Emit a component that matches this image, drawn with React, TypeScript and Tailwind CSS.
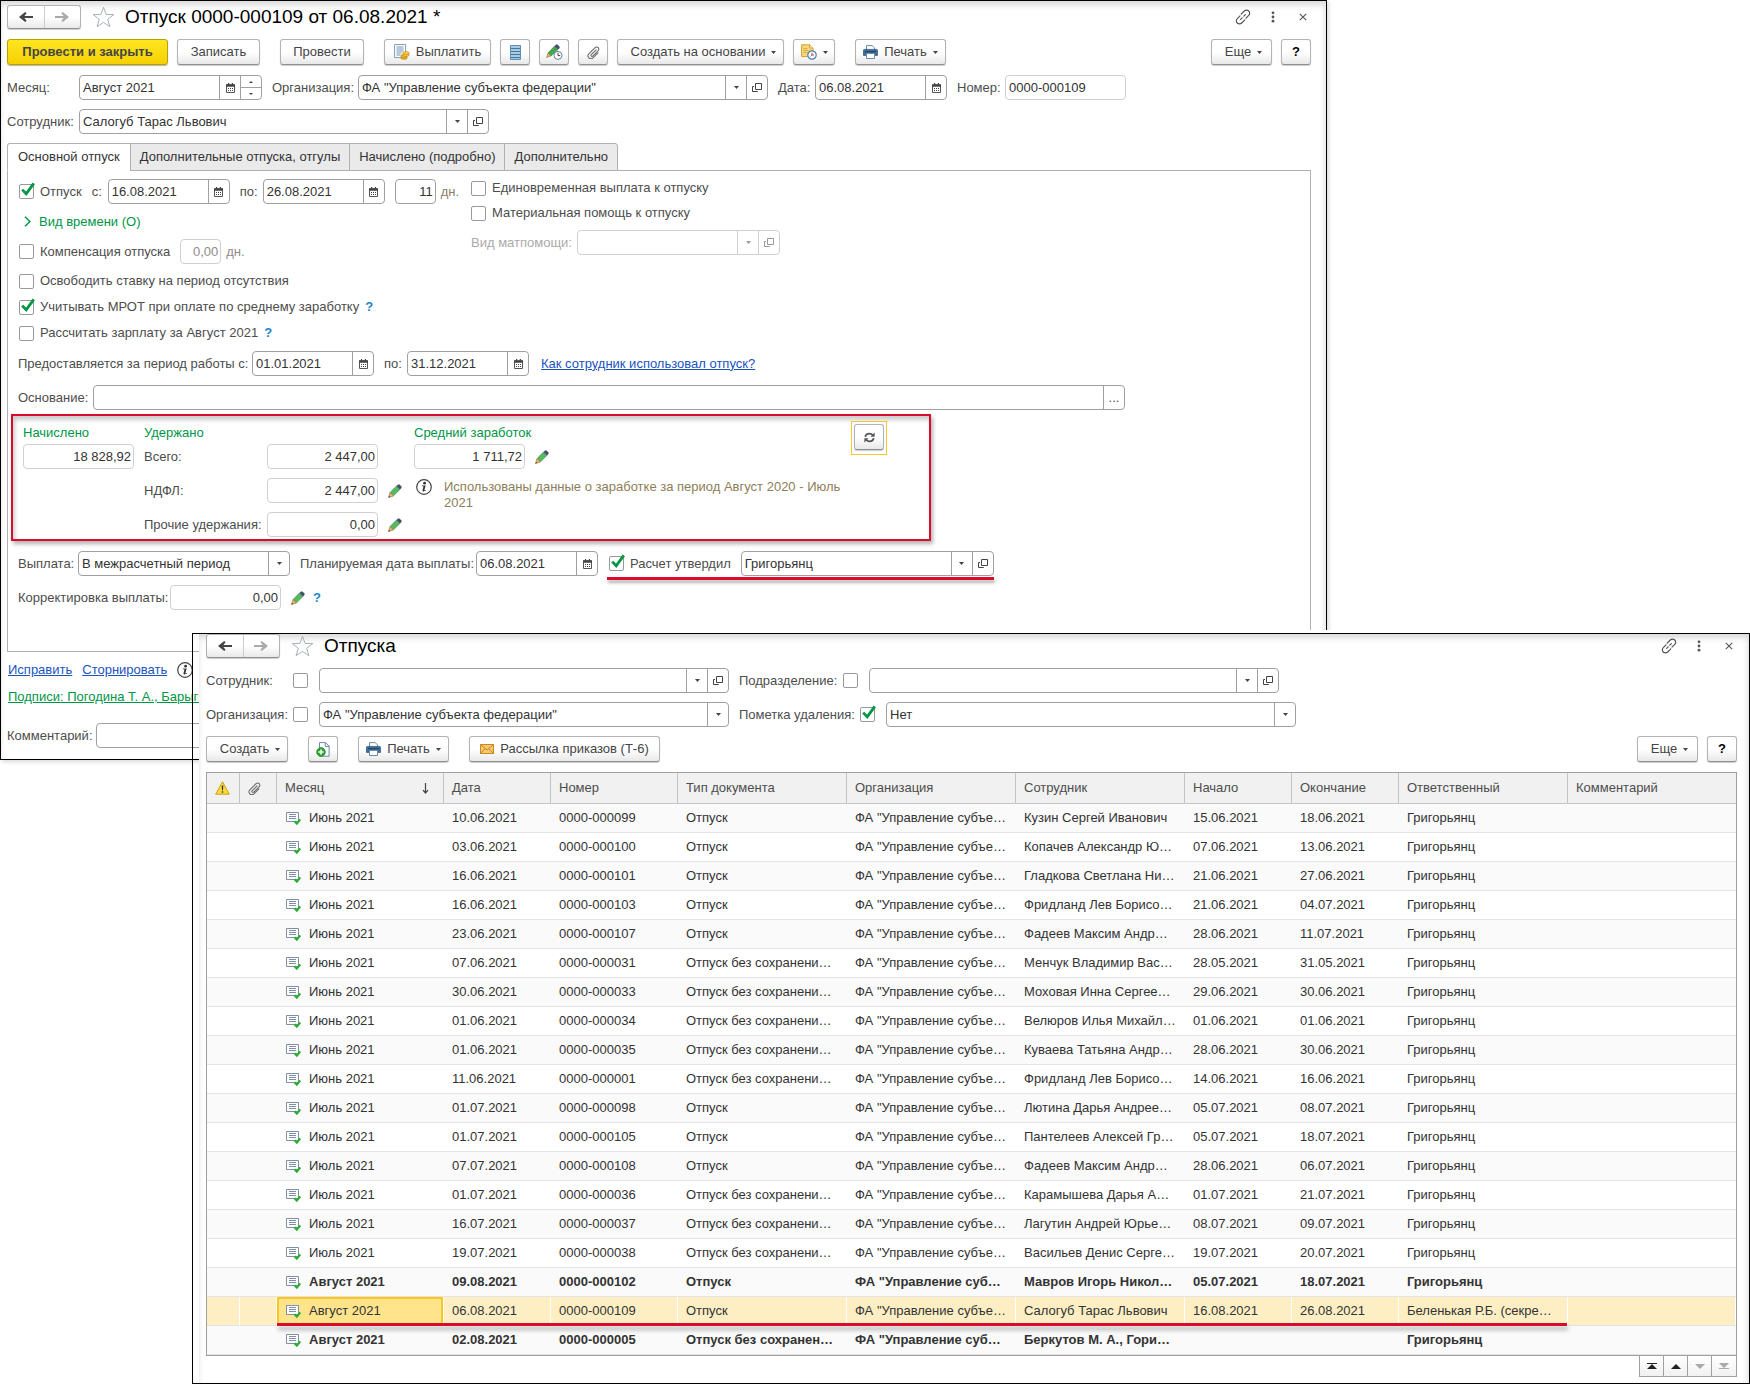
import { useState } from "react";
import type { ReactNode } from "react";

interface Leave {
  month: string;
  date: string;
  num: string;
  type: string;
  org: string;
  person: string;
  from: string;
  to: string;
  owner: string;
  bold?: boolean;
}

const ORG = 'ФА "Управление субъе…';
const UNPAID = "Отпуск без сохранени…";
const OWNER = "Григорьянц";

const LEAVES: Leave[] = [
  { month: "Июнь 2021", date: "10.06.2021", num: "0000-000099", type: "Отпуск", org: ORG, person: "Кузин Сергей Иванович", from: "15.06.2021", to: "18.06.2021", owner: OWNER },
  { month: "Июнь 2021", date: "03.06.2021", num: "0000-000100", type: "Отпуск", org: ORG, person: "Копачев Александр Ю…", from: "07.06.2021", to: "13.06.2021", owner: OWNER },
  { month: "Июнь 2021", date: "16.06.2021", num: "0000-000101", type: "Отпуск", org: ORG, person: "Гладкова Светлана Ни…", from: "21.06.2021", to: "27.06.2021", owner: OWNER },
  { month: "Июнь 2021", date: "16.06.2021", num: "0000-000103", type: "Отпуск", org: ORG, person: "Фридланд Лев Борисо…", from: "21.06.2021", to: "04.07.2021", owner: OWNER },
  { month: "Июнь 2021", date: "23.06.2021", num: "0000-000107", type: "Отпуск", org: ORG, person: "Фадеев Максим Андр…", from: "28.06.2021", to: "11.07.2021", owner: OWNER },
  { month: "Июнь 2021", date: "07.06.2021", num: "0000-000031", type: UNPAID, org: ORG, person: "Менчук Владимир Вас…", from: "28.05.2021", to: "31.05.2021", owner: OWNER },
  { month: "Июнь 2021", date: "30.06.2021", num: "0000-000033", type: UNPAID, org: ORG, person: "Моховая Инна Сергее…", from: "29.06.2021", to: "30.06.2021", owner: OWNER },
  { month: "Июнь 2021", date: "01.06.2021", num: "0000-000034", type: UNPAID, org: ORG, person: "Велюров Илья Михайл…", from: "01.06.2021", to: "01.06.2021", owner: OWNER },
  { month: "Июнь 2021", date: "01.06.2021", num: "0000-000035", type: UNPAID, org: ORG, person: "Куваева Татьяна Андр…", from: "28.06.2021", to: "30.06.2021", owner: OWNER },
  { month: "Июнь 2021", date: "11.06.2021", num: "0000-000001", type: UNPAID, org: ORG, person: "Фридланд Лев Борисо…", from: "14.06.2021", to: "16.06.2021", owner: OWNER },
  { month: "Июль 2021", date: "01.07.2021", num: "0000-000098", type: "Отпуск", org: ORG, person: "Лютина Дарья Андрее…", from: "05.07.2021", to: "08.07.2021", owner: OWNER },
  { month: "Июль 2021", date: "01.07.2021", num: "0000-000105", type: "Отпуск", org: ORG, person: "Пантелеев Алексей Гр…", from: "05.07.2021", to: "18.07.2021", owner: OWNER },
  { month: "Июль 2021", date: "07.07.2021", num: "0000-000108", type: "Отпуск", org: ORG, person: "Фадеев Максим Андр…", from: "28.06.2021", to: "06.07.2021", owner: OWNER },
  { month: "Июль 2021", date: "01.07.2021", num: "0000-000036", type: UNPAID, org: ORG, person: "Карамышева Дарья А…", from: "01.07.2021", to: "21.07.2021", owner: OWNER },
  { month: "Июль 2021", date: "16.07.2021", num: "0000-000037", type: UNPAID, org: ORG, person: "Лагутин Андрей Юрье…", from: "08.07.2021", to: "09.07.2021", owner: OWNER },
  { month: "Июль 2021", date: "19.07.2021", num: "0000-000038", type: UNPAID, org: ORG, person: "Васильев Денис Серге…", from: "19.07.2021", to: "20.07.2021", owner: OWNER },
  { month: "Август 2021", date: "09.08.2021", num: "0000-000102", type: "Отпуск", org: 'ФА "Управление суб…', person: "Мавров Игорь Никол…", from: "05.07.2021", to: "18.07.2021", owner: OWNER, bold: true },
  { month: "Август 2021", date: "06.08.2021", num: "0000-000109", type: "Отпуск", org: ORG, person: "Салогуб Тарас Львович", from: "16.08.2021", to: "26.08.2021", owner: "Беленькая Р.Б. (секре…" },
  { month: "Август 2021", date: "02.08.2021", num: "0000-000005", type: "Отпуск без сохранен…", org: 'ФА "Управление суб…', person: "Беркутов М. А., Гори…", from: "", to: "", owner: OWNER, bold: true },
];

/* ---------- icons ---------- */

function ArrowIcon({ right }: { right?: boolean }) {
  return (
    <svg width="14" height="10" viewBox="0 0 14 10" fill="currentColor" aria-hidden="true">
      {right ? (
        <path d="M0 3.9h8.6L6.4 1.2 7.8 0 14 5l-6.2 5-1.4-1.2 2.2-2.7H0z" />
      ) : (
        <path d="M14 3.9H5.4l2.2-2.7L6.2 0 0 5l6.2 5 1.4-1.2-2.2-2.7H14z" />
      )}
    </svg>
  );
}

function StarIcon() {
  return (
    <svg width="23" height="22" viewBox="0 0 23 22" fill="none" stroke="#a9b0b8" strokeWidth="1" aria-hidden="true">
      <path d="M11.5 1.2l2.6 7.2 7.7.2-6.1 4.7 2.2 7.4-6.4-4.3-6.4 4.3 2.2-7.4L1.2 8.6l7.7-.2z" />
    </svg>
  );
}

function LinkIcon() {
  return (
    <svg width="16" height="16" viewBox="0 0 16 16" fill="none" stroke="#555" strokeWidth="1.2" strokeLinecap="round" aria-hidden="true">
      <path d="M6.2 5.1L9.3 2a3 3 0 0 1 4.4 0 3 3 0 0 1 0 4.4L11 9.1 M9.8 10.9L6.7 14a3 3 0 0 1-4.4 0 3 3 0 0 1 0-4.4L5 6.9 M5.6 10.4l1.6-1.6 M8.8 7.2l1.6-1.6" />
    </svg>
  );
}

function DotsIcon() {
  return (
    <svg width="4" height="12" viewBox="0 0 4 12" fill="#555" aria-hidden="true">
      <circle cx="2" cy="1.8" r="1.4" />
      <circle cx="2" cy="6" r="1.4" />
      <circle cx="2" cy="10.2" r="1.4" />
    </svg>
  );
}

function CloseIcon() {
  return (
    <svg width="8" height="8" viewBox="0 0 8 8" stroke="#555" strokeWidth="1.1" aria-hidden="true">
      <path d="M.8.8l6.4 6.4M7.2.8L.8 7.2" />
    </svg>
  );
}

function Caret() {
  return (
    <svg width="5" height="3" viewBox="0 0 5 3" fill="currentColor" aria-hidden="true">
      <path d="M0 0h5L2.5 3z" />
    </svg>
  );
}

function CalendarIcon() {
  return (
    <svg width="9" height="10" viewBox="0 0 9 10" aria-hidden="true">
      <path d="M.5 2h8v7.5h-8z" fill="#fff" stroke="#555" />
      <path d="M0 1.3h9v2.4H0zM2 0h1.2v2H2zM5.8 0H7v2H5.8z" fill="#444" />
      <path d="M2 5h1v1H2zM4 5h1v1H4zM6 5h1v1H6zM2 7h1v1H2zM4 7h1v1H4zM6 7h1v1H6z" fill="#444" />
    </svg>
  );
}

function OpenIcon() {
  return (
    <svg width="10" height="10" viewBox="0 0 10 10" fill="none" stroke="currentColor" aria-hidden="true">
      <path d="M3.5.5h6v6h-6zM2 3.5H.5v5h5V8" />
    </svg>
  );
}

function PencilIcon() {
  return (
    <svg width="14" height="14" viewBox="0 0 14 14" className="shrink-0" aria-hidden="true">
      <path d="M.5 13.5l1.5-5L5.5 12z" fill="#f2b35c" stroke="#8a6a3a" strokeWidth=".6" />
      <path d="M.5 13.5l.5-1.6L2.1 13z" fill="#333" />
      <path d="M2.3 8.2l6.2-6.1 3.4 3.4-6.2 6.1z" fill="#55bb5e" stroke="#3d7d47" strokeWidth=".6" />
      <path d="M8.5 2.1L10 .6h1.5l2 2v1.3l-1.6 1.6z" fill="#44506a" />
    </svg>
  );
}

function InfoIcon() {
  return (
    <svg width="16" height="16" viewBox="0 0 16 16" className="shrink-0" aria-hidden="true">
      <circle cx="8" cy="8" r="7.3" fill="#fff" stroke="#444" strokeWidth="1.2" />
      <circle cx="8.6" cy="4.2" r="1.4" fill="#333" />
      <path d="M5.8 6.4h3.9l-1.3 4.7c-.1.5.4.4 1.3-.3l.3.5c-1 1.3-3.9 1.8-3.5-.1l1-3.9H5.8z" fill="#333" />
    </svg>
  );
}

function PayIcon() {
  return (
    <svg width="16" height="16" viewBox="0 0 16 16" aria-hidden="true">
      <path d="M.6.6h11v13h-11z" fill="#fff" stroke="#7d9bb3" />
      <path d="M2.5 3h7M2.5 5h7M2.5 7h7M2.5 9h5M2.5 11h4" stroke="#6f93b5" />
      <path d="M7 11.5c0-1 6-1 6 0v3c0 1-6 1-6 0z" fill="#f0b429" stroke="#b77f12" strokeWidth=".6" />
      <path d="M9 8.5c0-1 6-1 6 0v3c0 1-6 1-6 0z" fill="#f9cf4a" stroke="#b77f12" strokeWidth=".6" />
      <path d="M9 9.8c1 .9 5 .9 6 0M7 13c1 .9 5 .9 6 0" fill="none" stroke="#b77f12" strokeWidth=".6" />
    </svg>
  );
}

function ListIcon() {
  return (
    <svg width="11" height="15" viewBox="0 0 11 15" aria-hidden="true">
      <path d="M.5.5h10v14H.5z" fill="#a8cbe4" stroke="#5f8fb3" />
      <path d="M1 3.5h9M1 6.5h9M1 9.5h9M1 12.5h9" stroke="#47799f" />
    </svg>
  );
}

function PencilClockIcon() {
  return (
    <svg width="17" height="16" viewBox="0 0 17 16" aria-hidden="true">
      <path d="M.6 13.4l1.6-4.6 3 3z" fill="#f0b45a" stroke="#8a6a3a" strokeWidth=".6" />
      <path d="M2.2 8.8L8.4 2.2l3.6 3.4-6.8 6.2z" fill="#43a84c" stroke="#2c7d3a" strokeWidth=".6" />
      <path d="M8.4 2.2L10 .6h1.4l2.2 2.2v1.4L12 5.6z" fill="#44506a" />
      <circle cx="12" cy="11.4" r="4" fill="#fff" stroke="#6a8296" />
      <path d="M12 8.8v2.8h2.2" fill="none" stroke="#444" />
    </svg>
  );
}

function ClipIcon() {
  return (
    <svg width="13" height="13" viewBox="0 0 14 14" fill="none" stroke="#666" strokeWidth="1.1" strokeLinecap="round" aria-hidden="true">
      <path d="M9.8 4.2L4.6 9.4a1.1 1.1 0 0 0 1.6 1.6l5.9-5.9a2.4 2.4 0 0 0 0-3.4 2.4 2.4 0 0 0-3.4 0L2 8.4a3.2 3.2 0 0 0 0 4.4 3.2 3.2 0 0 0 4.4 0l5.4-5.4" />
    </svg>
  );
}

function NoteClockIcon() {
  return (
    <svg width="16" height="16" viewBox="0 0 16 16" aria-hidden="true">
      <path d="M.6.8h8.2L12 4v8.6H.6z" fill="#f8d77a" stroke="#cfa136" />
      <path d="M8.6.8V4H12" fill="#fff3c9" stroke="#cfa136" />
      <path d="M2.4 4.5h4M2.4 6.5h5M2.4 8.5h4" stroke="#cfa136" strokeWidth=".8" />
      <circle cx="11" cy="11" r="4.2" fill="#fff" stroke="#4a7fae" strokeWidth="1.2" />
      <path d="M11 8.6V11h2" fill="none" stroke="#d03a2b" />
      <path d="M11 11l-1.6 1.4" stroke="#4a7fae" />
    </svg>
  );
}

function PrinterIcon() {
  return (
    <svg width="15" height="14" viewBox="0 0 15 14" aria-hidden="true">
      <path d="M3.5 5V.6h5.6l2.4 2.2V5" fill="#fff" stroke="#6c8ba6" />
      <path d="M1.4 4.4h12.2c.6 0 1 .4 1 1v5H.4v-5c0-.6.4-1 1-1z" fill="#3d6f9c" stroke="#2b5173" strokeWidth=".7" />
      <path d="M2 6.7h11" stroke="#1d3c58" />
      <path d="M3.5 8.5h8v5h-8z" fill="#fff" stroke="#6c8ba6" />
    </svg>
  );
}

function CopyAddIcon() {
  return (
    <svg width="14" height="15" viewBox="0 0 14 15" aria-hidden="true">
      <path d="M3.5.6h6l3.6 3.6v10H3.5z" fill="#fff" stroke="#6c8ba6" />
      <path d="M9.3.6v3.8h3.8" fill="none" stroke="#6c8ba6" />
      <circle cx="5" cy="10" r="4.4" fill="#2ba52f" stroke="#1b7d22" strokeWidth=".6" />
      <path d="M5 7.4v5.2M2.4 10h5.2" stroke="#fff" strokeWidth="1.6" />
    </svg>
  );
}

function MailIcon() {
  return (
    <svg width="14" height="10" viewBox="0 0 14 10" aria-hidden="true">
      <path d="M.5.5h13v9H.5z" fill="#f7c76c" stroke="#c98a22" />
      <path d="M.5.5L7 6 13.5.5M.5 9.5l4.8-5M13.5 9.5l-4.8-5" fill="none" stroke="#b9791a" strokeWidth=".8" />
    </svg>
  );
}

function WarnIcon() {
  return (
    <svg width="15" height="14" viewBox="0 0 15 14" aria-hidden="true">
      <path d="M7.5.8l6.8 12.4H.7z" fill="#ffd93b" stroke="#c9a414" strokeLinejoin="round" />
      <path d="M6.7 4.6h1.6l-.3 4.6h-1z M6.8 10.2h1.4v1.5H6.8z" fill="#333" />
    </svg>
  );
}

function RefreshIcon() {
  return (
    <svg width="11" height="11" viewBox="0 0 12 11" fill="none" stroke="#555" strokeWidth="2" aria-hidden="true">
      <path d="M1.5 4.8C1.8 2.6 3.7 1.3 6 1.3c1.5 0 2.6.5 3.4 1.5M10.5 6.2c-.3 2.2-2.2 3.5-4.5 3.5-1.5 0-2.6-.5-3.4-1.5" />
      <path d="M11.6 0v4.6H7zM.4 11V6.4H5z" fill="#555" stroke="none" />
    </svg>
  );
}

function PostedIcon() {
  return (
    <svg width="15" height="13" viewBox="0 0 15 13" className="mt-px shrink-0" aria-hidden="true">
      <path d="M.5.5h12v9H.5z" fill="#fff" stroke="#7f8fa6" />
      <path d="M3 2.5h7M3 4.5h7M3 6.5h7" stroke="#7f8fa6" />
      <path d="M8.5 9.3l2.3 2.3 3.5-4.2" fill="none" stroke="#2cae35" strokeWidth="2.2" />
    </svg>
  );
}

/* ---------- controls ---------- */

const BTN =
  "flex h-[26px] items-center justify-center rounded-[3px] border border-[#b3b3b3] border-b-[#8f8f8f] bg-gradient-to-b from-white from-50% to-[#e9e9e9] text-[#444] shadow-[0_1px_1px_rgba(0,0,0,0.2)]";
const CELL = "flex h-full w-[21px] shrink-0 items-center justify-center border-l";

function Btn({ className, label, children }: { className: string; label?: string; children: ReactNode }) {
  return (
    <button type="button" aria-label={label} className={`${BTN} ${className}`}>
      {children}
    </button>
  );
}

function Box({ className, muted, children }: { className: string; muted?: boolean; children: ReactNode }) {
  return (
    <div className={`flex h-[25px] items-center overflow-hidden rounded-[4px] border bg-white ${muted ? "border-[#d0d0d0]" : "border-[#a0a0a0]"} ${className}`}>
      {children}
    </div>
  );
}

interface TextProps {
  id: string;
  value?: string;
  className: string;
  right?: boolean;
  muted?: boolean;
  disabled?: boolean;
}

function TextField({ id, value = "", className, right, muted, disabled }: TextProps) {
  return (
    <Box className={className} muted={muted}>
      <input id={id} type="text" defaultValue={value} disabled={disabled}
        className={`h-full w-full min-w-0 bg-transparent outline-none ${right ? "pr-[2px] text-right" : "pl-[3px]"} ${disabled ? "text-[#8c8c8c]" : "text-[#333]"}`} />
    </Box>
  );
}

function DateField({ id, value, className, spin }: { id: string; value: string; className: string; spin?: boolean }) {
  return (
    <Box className={className}>
      <input id={id} type="text" defaultValue={value} className="h-full w-full min-w-0 pl-[3px] text-[#333] outline-none" />
      <button type="button" aria-label="Выбрать дату" className={`${CELL} border-[#a0a0a0]`}><CalendarIcon /></button>
      {spin && (
        <span className="flex h-full w-[21px] shrink-0 flex-col border-l border-[#a0a0a0]">
          <button type="button" aria-label="Больше" className="flex flex-1 items-center justify-center border-b border-[#a0a0a0]">
            <svg width="4" height="2" viewBox="0 0 4 2" fill="#444"><path d="M0 2h4L2 0z" /></svg>
          </button>
          <button type="button" aria-label="Меньше" className="flex flex-1 items-center justify-center">
            <svg width="4" height="2" viewBox="0 0 4 2" fill="#444"><path d="M0 0h4L2 2z" /></svg>
          </button>
        </span>
      )}
    </Box>
  );
}

function SelectField({ id, value = "", className, open, disabled }: { id: string; value?: string; className: string; open?: boolean; disabled?: boolean }) {
  const cell = disabled ? "border-[#d0d0d0] text-[#999]" : "border-[#a0a0a0] text-[#444]";
  return (
    <Box className={className} muted={disabled}>
      <select id={id} defaultValue={value} disabled={disabled} className="h-full w-full min-w-0 appearance-none bg-transparent pl-[3px] text-[#333] outline-none">
        <option value={value}>{value}</option>
      </select>
      <span className={`${CELL} ${cell}`}><Caret /></span>
      {open && (
        <button type="button" aria-label="Открыть" disabled={disabled} className={`${CELL} ${cell}`}><OpenIcon /></button>
      )}
    </Box>
  );
}

function Check({ id, label, checked = false }: { id: string; label?: string; checked?: boolean }) {
  const [on, setOn] = useState(checked);
  return (
    <span className="flex h-4 items-center gap-[6px] whitespace-nowrap">
      <span className="relative size-[15px] shrink-0">
        <input id={id} type="checkbox" checked={on} onChange={(e) => setOn(e.target.checked)}
          className="block size-[15px] appearance-none rounded-[2px] border border-[#999] bg-white" />
        {on && (
          <svg width="15" height="15" viewBox="0 0 15 15" className="pointer-events-none absolute -top-[2px] left-[2px]" fill="none" stroke="#009646" strokeWidth="2.8" aria-hidden="true">
            <path d="M1.2 7.6l4 4.2L12.8 1.4" />
          </svg>
        )}
      </span>
      {label && <label htmlFor={id}>{label}</label>}
    </span>
  );
}

function Help() {
  return <button type="button" aria-label="Подсказка" className="font-bold text-[#1c86c7]">?</button>;
}

function Edit() {
  return <button type="button" aria-label="Изменить"><PencilIcon /></button>;
}

function TitleBar({ title }: { title: string }) {
  return (
    <header className="flex h-6 items-center">
      <div className="flex h-6 w-[74px] shrink-0 overflow-hidden rounded-[3px] border border-[#b3b3b3] border-b-[#8f8f8f] bg-gradient-to-b from-white from-50% to-[#e9e9e9] shadow-[0_1px_1px_rgba(0,0,0,0.2)]">
        <button type="button" aria-label="Назад" className="flex flex-1 items-center justify-center border-r border-[#ccc] text-[#444]"><ArrowIcon /></button>
        <button type="button" aria-label="Вперед" className="flex flex-1 items-center justify-center text-[#aaa]"><ArrowIcon right /></button>
      </div>
      <button type="button" aria-label="В избранное" className="ml-[11px]"><StarIcon /></button>
      <h1 className="ml-[10px] flex-1 truncate text-[19px] leading-6 text-black">{title}</h1>
      <button type="button" aria-label="Ссылка"><LinkIcon /></button>
      <button type="button" aria-label="Меню" className="ml-5"><DotsIcon /></button>
      <button type="button" aria-label="Закрыть" className="mr-1 ml-6"><CloseIcon /></button>
    </header>
  );
}

/* ---------- windows ---------- */

const TABS = ["Основной отпуск", "Дополнительные отпуска, отгулы", "Начислено (подробно)", "Дополнительно"];

function LeaveForm() {
  const [tab, setTab] = useState(0);

  return (
    <section className="mr-[423px] border border-black bg-white pt-1 pr-[15px] pb-[11px] pl-[6px] shadow-[inset_-1px_4px_6px_rgba(0,0,0,0.15),2px_2px_4px_rgba(0,0,0,0.15)]">
      <TitleBar title="Отпуск 0000-000109 от 06.08.2021 *" />

      <div className="mt-[10px] flex">
        <button type="button" className="h-[26px] w-[161px] rounded-[3px] border border-[#b8a000] bg-gradient-to-b from-[#ffe61f] to-[#f5d000] font-bold text-[#444] shadow-[0_1px_1px_rgba(0,0,0,0.3)]">
          Провести и закрыть
        </button>
        <Btn className="ml-[9px] w-[83px]">Записать</Btn>
        <Btn className="ml-5 w-[84px]">Провести</Btn>
        <Btn className="ml-5 w-[107px] gap-[6px]"><PayIcon />Выплатить</Btn>
        <Btn className="ml-[9px] w-[30px]" label="Список"><ListIcon /></Btn>
        <Btn className="ml-[9px] w-[30px]" label="Исправления"><PencilClockIcon /></Btn>
        <Btn className="ml-[9px] w-[30px]" label="Файлы"><ClipIcon /></Btn>
        <Btn className="ml-[9px] w-[167px] gap-[6px] pl-[6px]">Создать на основании<Caret /></Btn>
        <Btn className="ml-[9px] w-[42px] gap-[6px]" label="Напоминания"><NoteClockIcon /><Caret /></Btn>
        <Btn className="ml-5 w-[91px] gap-[6px]"><PrinterIcon />Печать<Caret /></Btn>
        <Btn className="ml-auto w-[61px] gap-[6px] pl-1">Еще<Caret /></Btn>
        <Btn className="ml-[9px] w-[30px] font-bold text-black">?</Btn>
      </div>

      <div className="mt-[10px] flex items-center whitespace-nowrap">
        <label htmlFor="month" className="w-[72px]">Месяц:</label>
        <DateField id="month" value="Август 2021" className="w-[183px]" spin />
        <label htmlFor="org" className="ml-[10px] w-[86px]">Организация:</label>
        <SelectField id="org" value={'ФА "Управление субъекта федерации"'} className="w-[410px]" open />
        <label htmlFor="date" className="ml-[10px] w-[37px]">Дата:</label>
        <DateField id="date" value="06.08.2021" className="w-[132px]" />
        <label htmlFor="number" className="ml-[10px] w-12">Номер:</label>
        <TextField id="number" value="0000-000109" className="w-[121px]" muted />
      </div>

      <div className="mt-[9px] flex items-center">
        <label htmlFor="employee" className="w-[72px]">Сотрудник:</label>
        <SelectField id="employee" value="Салогуб Тарас Львович" className="w-[410px]" open />
      </div>

      <div role="tablist" className="relative mt-[9px] -mb-px flex">
        {TABS.map((t, i) => (
          <button key={t} type="button" role="tab" aria-selected={tab === i} onClick={() => setTab(i)}
            className={`-mr-px h-7 border border-[#b0b0b0] px-[9px] text-[#333] first:rounded-tl-[3px] first:px-[10px] last:rounded-tr-[3px] ${tab === i ? "border-b-white bg-white" : "bg-[#eaeaea]"}`}>
            {t}
          </button>
        ))}
      </div>

      <div className="border border-[#b0b0b0] pt-2 pb-[41px] pl-[10px]">
        <div className="flex pl-px">
          <div className="flex w-[452px] shrink-0 flex-col gap-[9px] whitespace-nowrap">
            <div className="flex items-center">
              <Check id="leave" label="Отпуск" checked />
              <label htmlFor="from" className="ml-[10px] w-[16px]">с:</label>
              <DateField id="from" value="16.08.2021" className="w-[122px]" />
              <label htmlFor="to" className="ml-[10px] w-[23px]">по:</label>
              <DateField id="to" value="26.08.2021" className="w-[122px]" />
              <TextField id="days" value="11" className="ml-[10px] w-[41px]" right />
              <label htmlFor="days" className="ml-[5px] text-[#8c7e68]">дн.</label>
            </div>
            <button type="button" className="flex h-[17px] items-center gap-2 pl-[5px] text-[#009646]">
              <svg width="7" height="11" viewBox="0 0 7 11" fill="none" stroke="currentColor" strokeWidth="1.5" aria-hidden="true"><path d="M1 .8l5 4.7-5 4.7" /></svg>
              Вид времени (О)
            </button>
            <div className="flex items-center">
              <Check id="comp" label="Компенсация отпуска" />
              <TextField id="compDays" value="0,00" className="ml-[10px] w-[41px]" right muted disabled />
              <label htmlFor="compDays" className="ml-[5px] text-[#8c8c8c]">дн.</label>
            </div>
          </div>
          <div className="flex flex-col gap-[9px] pt-px">
            <Check id="once" label="Единовременная выплата к отпуску" />
            <Check id="aid" label="Материальная помощь к отпуску" />
            <div className="flex items-center">
              <label htmlFor="aidKind" className="w-[106px] text-[#aaa]">Вид матпомощи:</label>
              <SelectField id="aidKind" className="w-[203px]" open disabled />
            </div>
          </div>
        </div>

        <div className="mt-[9px] flex flex-col gap-[10px] pl-px">
          <Check id="release" label="Освободить ставку на период отсутствия" />
          <div className="flex gap-[6px]"><Check id="mrot" label="Учитывать МРОТ при оплате по среднему заработку" checked /><Help /></div>
          <div className="flex gap-[6px]"><Check id="calc" label="Рассчитать зарплату за Август 2021" /><Help /></div>
        </div>
        <div className="mt-[10px] flex items-center">
          <label htmlFor="pFrom" className="w-[234px]">Предоставляется за период работы с:</label>
          <DateField id="pFrom" value="01.01.2021" className="w-[122px]" />
          <label htmlFor="pTo" className="ml-[10px] w-[23px]">по:</label>
          <DateField id="pTo" value="31.12.2021" className="w-[122px]" />
          <a href="#usage" className="ml-3 text-[#1a54c0] underline">Как сотрудник использовал отпуск?</a>
        </div>
        <div className="mt-[9px] mr-[185px] flex items-center">
          <label htmlFor="basis" className="w-[75px] shrink-0">Основание:</label>
          <Box className="flex-1">
            <input id="basis" type="text" className="h-full w-full min-w-0 pl-[3px] text-[#333] outline-none" />
            <button type="button" aria-label="Выбрать основание" className={`${CELL} border-[#a0a0a0]`}>...</button>
          </Box>
        </div>

        <div className="mt-1 mr-[379px] -ml-[7px] flex border-2 border-[#d90d2b] pt-[9px] pb-[2px] pl-[10px] shadow-[2px_3px_4px_rgba(0,0,0,0.3),inset_2px_4px_4px_rgba(0,0,0,0.2)]">
          <div className="flex w-[121px] shrink-0 flex-col gap-[3px]">
            <label htmlFor="accrued" className="text-[#009646]">Начислено</label>
            <TextField id="accrued" value="18 828,92" className="w-[111px]" right muted />
          </div>
          <div className="w-[270px] shrink-0">
            <div className="text-[#009646]">Удержано</div>
            <div className="mt-[3px] flex flex-col gap-[9px]">
              <div className="flex items-center">
                <label htmlFor="held" className="w-[123px]">Всего:</label>
                <TextField id="held" value="2 447,00" className="w-[111px]" right muted />
              </div>
              <div className="flex items-center">
                <label htmlFor="ndfl" className="w-[123px]">НДФЛ:</label>
                <TextField id="ndfl" value="2 447,00" className="mr-[10px] w-[111px]" right muted />
                <Edit />
              </div>
              <div className="flex items-center">
                <label htmlFor="other" className="w-[123px]">Прочие удержания:</label>
                <TextField id="other" value="0,00" className="mr-[10px] w-[111px]" right muted />
                <Edit />
              </div>
            </div>
          </div>
          <div className="flex-1">
            <label htmlFor="average" className="block text-[#009646]">Средний заработок</label>
            <div className="mt-[3px] flex items-center gap-[10px]">
              <TextField id="average" value="1 711,72" className="w-[111px]" right muted />
              <Edit />
            </div>
            <div className="mt-[10px] flex gap-3 pl-[2px] text-[#8c7e58]">
              <InfoIcon />
              <p className="max-w-[400px]">Использованы данные о заработке за период Август 2020 - Июль 2021</p>
            </div>
          </div>
          <div className="mr-[42px] -mt-1 h-[34px] border border-[#f5c731] p-[2px]">
            <Btn className="w-[30px]" label="Пересчитать"><RefreshIcon /></Btn>
          </div>
        </div>

        <div className="mt-[10px] flex items-center whitespace-nowrap">
          <label htmlFor="payout" className="w-[60px]">Выплата:</label>
          <SelectField id="payout" value="В межрасчетный период" className="w-[212px]" />
          <label htmlFor="payDate" className="ml-[10px] w-[176px]">Планируемая дата выплаты:</label>
          <DateField id="payDate" value="06.08.2021" className="w-[122px]" />
          <div className="relative ml-[9px] flex items-center pl-[2px]">
            <Check id="approved" label="Расчет утвердил" checked />
            <SelectField id="approver" value="Григорьянц" className="ml-[10px] w-[253px]" open />
            <div className="absolute inset-x-0 -bottom-1 h-[3px] bg-[#d90d2b] shadow-[1px_3px_3px_rgba(0,0,0,0.3)]" />
          </div>
        </div>
        <div className="mt-[9px] flex items-center">
          <label htmlFor="adjust" className="w-[152px]">Корректировка выплаты:</label>
          <TextField id="adjust" value="0,00" className="mr-[10px] w-[111px]" right muted />
          <Edit />
          <span className="ml-2"><Help /></span>
        </div>
      </div>

      <div className="mt-[10px] flex items-center pl-px text-[#1a54c0]">
        <a href="#fix" className="underline">Исправить</a>
        <a href="#reverse" className="ml-[10px] underline">Сторнировать</a>
        <span className="ml-[10px]"><InfoIcon /></span>
      </div>
      <a href="#signs" className="mt-[11px] block w-[300px] pl-px text-[#009646] underline">Подписи: Погодина Т. А., Барыгин</a>
      <div className="mt-[18px] flex items-center">
        <label htmlFor="comment" className="w-[89px]">Комментарий:</label>
        <TextField id="comment" className="w-[410px]" />
      </div>
    </section>
  );
}

const TH = "h-[31px] border-r border-b border-[#c4c4c4] bg-[#f1f1f1] px-2 text-left font-normal";

function LeaveList() {
  const [selected, setSelected] = useState(17);

  return (
    <section className="relative -mt-[127px] ml-[192px] border border-black pl-[6px] shadow-[0_-3px_0_white]">
      <div className="bg-white pr-3 pb-[6px] pl-[7px] shadow-[inset_-1px_4px_6px_rgba(0,0,0,0.15)]">
        <TitleBar title="Отпуска" />

        <div className="mt-[10px] flex items-center whitespace-nowrap">
          <label htmlFor="fEmployee" className="w-[87px]">Сотрудник:</label>
          <Check id="fEmployeeOn" />
          <SelectField id="fEmployee" className="ml-[11px] w-[410px]" open />
          <label htmlFor="fDept" className="ml-[10px] w-[104px]">Подразделение:</label>
          <Check id="fDeptOn" />
          <SelectField id="fDept" className="ml-[11px] w-[410px]" open />
        </div>
        <div className="mt-[9px] flex items-center whitespace-nowrap">
          <label htmlFor="fOrg" className="w-[87px]">Организация:</label>
          <Check id="fOrgOn" />
          <SelectField id="fOrg" value={'ФА "Управление субъекта федерации"'} className="ml-[11px] w-[410px]" />
          <label htmlFor="fDeleted" className="ml-[10px] w-[121px]">Пометка удаления:</label>
          <Check id="fDeletedOn" checked />
          <SelectField id="fDeleted" value="Нет" className="ml-[11px] w-[410px]" />
        </div>

        <div className="mt-[9px] flex">
          <Btn className="w-[82px] gap-[6px] pl-[6px]">Создать<Caret /></Btn>
          <Btn className="ml-5 w-[30px]" label="Скопировать"><CopyAddIcon /></Btn>
          <Btn className="ml-5 w-[91px] gap-[6px]"><PrinterIcon />Печать<Caret /></Btn>
          <Btn className="ml-5 w-[191px] gap-[6px]"><MailIcon />Рассылка приказов (Т-6)</Btn>
          <Btn className="ml-auto w-[61px] gap-[6px] pl-1">Еще<Caret /></Btn>
          <Btn className="ml-[9px] w-[30px] font-bold text-black">?</Btn>
        </div>

        <div className="relative mt-[10px] border border-[#a0a0a0]">
          <table className="w-full table-fixed border-separate border-spacing-0 whitespace-nowrap">
            <colgroup>
              <col className="w-[33px]" />
              <col className="w-[37px]" />
              <col className="w-[167px]" />
              <col className="w-[107px]" />
              <col className="w-[127px]" />
              <col className="w-[169px]" />
              <col className="w-[169px]" />
              <col className="w-[169px]" />
              <col className="w-[107px]" />
              <col className="w-[107px]" />
              <col className="w-[169px]" />
              <col />
            </colgroup>
            <thead>
              <tr>
                <th className={TH} aria-label="Внимание"><WarnIcon /></th>
                <th className={TH} aria-label="Файлы"><ClipIcon /></th>
                <th className={TH}>
                  <span className="flex items-center justify-between pr-[6px]">
                    Месяц
                    <svg width="7" height="11" viewBox="0 0 7 11" fill="none" stroke="#444" strokeWidth="1.2" aria-hidden="true"><path d="M3.5 0v10M1 7.2L3.5 10 6 7.2" /></svg>
                  </span>
                </th>
                <th className={TH}>Дата</th>
                <th className={TH}>Номер</th>
                <th className={TH}>Тип документа</th>
                <th className={TH}>Организация</th>
                <th className={TH}>Сотрудник</th>
                <th className={TH}>Начало</th>
                <th className={TH}>Окончание</th>
                <th className={TH}>Ответственный</th>
                <th className="h-[31px] border-b border-[#c4c4c4] bg-[#f1f1f1] px-2 text-left font-normal">Комментарий</th>
              </tr>
            </thead>
            <tbody className="text-[#333]">
              {LEAVES.map((r, i) => {
                const sel = i === selected;
                const td = `h-[29px] overflow-hidden border-b border-[#e3e3e3] px-2 ${sel ? "border-r border-r-white" : ""}`;
                return (
                  <tr key={r.num} onClick={() => setSelected(i)}
                    className={`${sel ? "bg-[#fdefc3]" : i % 2 === 0 ? "bg-[#fafafa]" : "bg-white"} ${r.bold ? "font-bold" : ""}`}>
                    <td className={td} />
                    <td className={td} />
                    <td className={`${td} ${sel ? "bg-[#ffe48c] shadow-[inset_0_0_0_2px_#f9c61e]" : ""}`}>
                      <span className="flex items-center gap-2 pl-px"><PostedIcon />{r.month}</span>
                    </td>
                    <td className={td}>{r.date}</td>
                    <td className={td}>{r.num}</td>
                    <td className={td}>{r.type}</td>
                    <td className={td}>{r.org}</td>
                    <td className={td}>{r.person}</td>
                    <td className={td}>{r.from}</td>
                    <td className={td}>{r.to}</td>
                    <td className={td}>{r.owner}</td>
                    <td className={td} />
                  </tr>
                );
              })}
            </tbody>
          </table>
          <div className="pointer-events-none absolute right-[169px] bottom-[29px] left-[70px] h-[3px] bg-[#d90d2b] shadow-[1px_4px_4px_rgba(0,0,0,0.3)]" />
        </div>

        <div className="-mt-px flex justify-end">
          <div className="flex h-[22px] divide-x divide-[#a0a0a0] border border-[#a0a0a0] bg-gradient-to-b from-white to-[#f1f1f1]">
            <button type="button" aria-label="В начало" className="flex w-6 items-center justify-center">
              <svg width="10" height="6" viewBox="0 0 10 6" fill="#222"><path d="M0 0h10v1H0zM5 1l5 5H0z" /></svg>
            </button>
            <button type="button" aria-label="Вверх" className="flex w-6 items-center justify-center">
              <svg width="10" height="5" viewBox="0 0 10 5" fill="#222"><path d="M5 0l5 5H0z" /></svg>
            </button>
            <button type="button" aria-label="Вниз" className="flex w-6 items-center justify-center">
              <svg width="10" height="5" viewBox="0 0 10 5" fill="#aaa"><path d="M0 0h10L5 5z" /></svg>
            </button>
            <button type="button" aria-label="В конец" className="flex w-6 items-center justify-center">
              <svg width="10" height="6" viewBox="0 0 10 6" fill="#aaa"><path d="M0 0h10L5 5zM0 5h10v1H0z" /></svg>
            </button>
          </div>
        </div>
      </div>
    </section>
  );
}

export default function App() {
  return (
    <main className="bg-white font-['Liberation_Sans',Arial,sans-serif] text-[13px] leading-4 text-[#4d4d4d]">
      <LeaveForm />
      <LeaveList />
    </main>
  );
}
